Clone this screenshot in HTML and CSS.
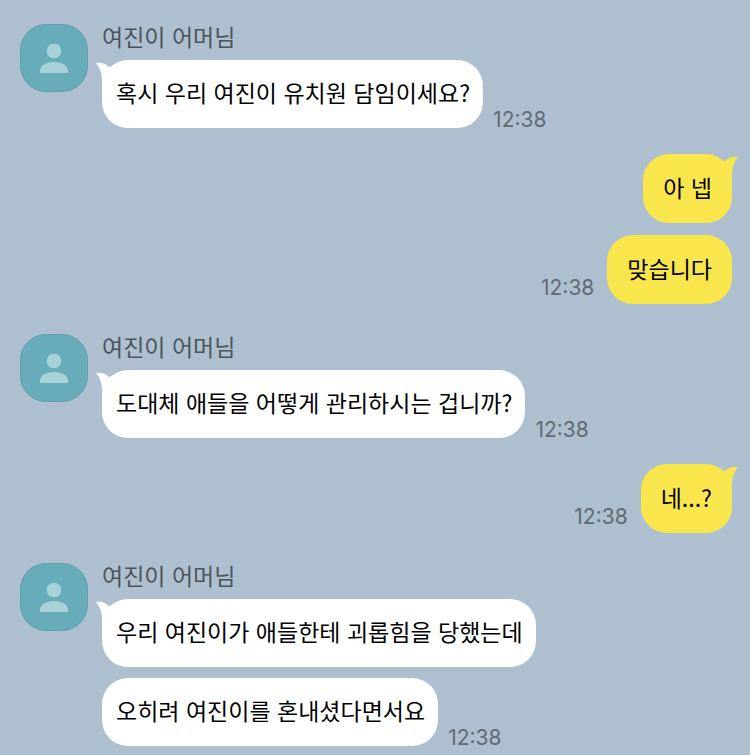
FILE: index.html
```html
<!DOCTYPE html>
<html lang="ko">
<head>
    <meta charset="UTF-8">
    <meta name="viewport" content="width=device-width, initial-scale=1.0">
    <title>여진이 어머님</title>
    <link rel="stylesheet" href="styles.css">
</head>
<body>

    <!-- Shapes shared by all messages -->
    <svg class="shapes" width="0" height="0" aria-hidden="true">
        <symbol id="person" viewBox="0 0 28 30">
            <circle cx="14" cy="8" r="7.3"/>
            <path d="M0 30v-2C0 22.500 6 19 14 19s14 3.500 14 9v2z"/>
        </symbol>
        <symbol id="tail" viewBox="0 0 18 26">
            <path d="M0 3C5 2 9 3 13 7l5-1-9 20H6V21C6 13 4 8 0 3z"/>
        </symbol>
    </svg>

    <main class="chat">
        <!-- Received -->
        <section class="received">
            <div class="avatar"><svg aria-hidden="true"><use href="#person"/></svg></div>
            <div class="messages">
                <h2 class="name">여진이 어머님</h2>
                <div class="row">
                    <p class="bubble"><svg class="tail" aria-hidden="true"><use href="#tail"/></svg>혹시 우리 여진이 유치원 담임이세요?</p>
                    <time class="time">12:38</time>
                </div>
            </div>
        </section>

        <!-- Sent -->
        <section class="sent">
            <div class="row">
                <p class="bubble"><svg class="tail" aria-hidden="true"><use href="#tail"/></svg>아 넵</p>
            </div>
            <div class="row">
                <time class="time">12:38</time>
                <p class="bubble">맞습니다</p>
            </div>
        </section>

        <!-- Received -->
        <section class="received">
            <div class="avatar"><svg aria-hidden="true"><use href="#person"/></svg></div>
            <div class="messages">
                <h2 class="name">여진이 어머님</h2>
                <div class="row">
                    <p class="bubble"><svg class="tail" aria-hidden="true"><use href="#tail"/></svg>도대체 애들을 어떻게 관리하시는 겁니까?</p>
                    <time class="time">12:38</time>
                </div>
            </div>
        </section>

        <!-- Sent -->
        <section class="sent">
            <div class="row">
                <time class="time">12:38</time>
                <p class="bubble"><svg class="tail" aria-hidden="true"><use href="#tail"/></svg>네...?</p>
            </div>
        </section>

        <!-- Received -->
        <section class="received">
            <div class="avatar"><svg aria-hidden="true"><use href="#person"/></svg></div>
            <div class="messages">
                <h2 class="name">여진이 어머님</h2>
                <div class="row">
                    <p class="bubble"><svg class="tail" aria-hidden="true"><use href="#tail"/></svg>우리 여진이가 애들한테 괴롭힘을 당했는데</p>
                </div>
                <div class="row">
                    <p class="bubble">오히려 여진이를 혼내셨다면서요</p>
                    <time class="time">12:38</time>
                </div>
            </div>
        </section>
    </main>

</body>
</html>
```
FILE: styles.css
```css
* {
    box-sizing: border-box;
}

body {
    margin: 0;
    background-color: #aec0cf;
    font-family: "Noto Sans CJK KR", sans-serif;
    font-size: 23px;
    line-height: 28px;
}

.shapes {
    display: block;
}

.chat {
    padding: 24px 18px 9px 20px;
}

.received {
    display: flex;
    gap: 14px;
}

.avatar {
    flex: none;
    display: flex;
    justify-content: center;
    width: 68px;
    height: 68px;
    padding-top: 18px;
    background-color: #68acba;
    border: 1px solid #5c9fae;
    border-radius: 26px;
}

.avatar svg {
    width: 28px;
    height: 30px;
    fill: #a7d2d8;
}

.messages {
    display: flex;
    flex-direction: column;
    gap: 11px;
}

.name {
    margin: 0;
    color: #4b545c;
    font-size: 23px;
    font-weight: 400;
    line-height: 25px;
}

.row {
    display: flex;
    align-items: flex-end;
    gap: 10px;
}

.bubble {
    position: relative;
    margin: 0;
    padding: 18px 13px 22px 14px;
    background-color: #fff;
    border-radius: 26px;
    color: #000;
}

.time {
    color: #5f6a73;
    font-family: Inter, sans-serif;
    font-size: 21px;
    line-height: 16px;
}

.tail {
    position: absolute;
    top: 0;
    left: -6px;
    width: 18px;
    height: 26px;
    fill: #fff;
}

.sent {
    display: flex;
    flex-direction: column;
    align-items: flex-end;
    gap: 12px;
    margin: 26px 0 30px;
}

.sent .row {
    gap: 13px;
}

.sent .bubble {
    padding: 19px 20px 22px;
    background-color: #f9e54c;
}

.sent .time {
    padding-bottom: 8px;
}

.sent .tail {
    right: -6px;
    left: auto;
    fill: #f9e54c;
    transform: scaleX(-1);
}
```
